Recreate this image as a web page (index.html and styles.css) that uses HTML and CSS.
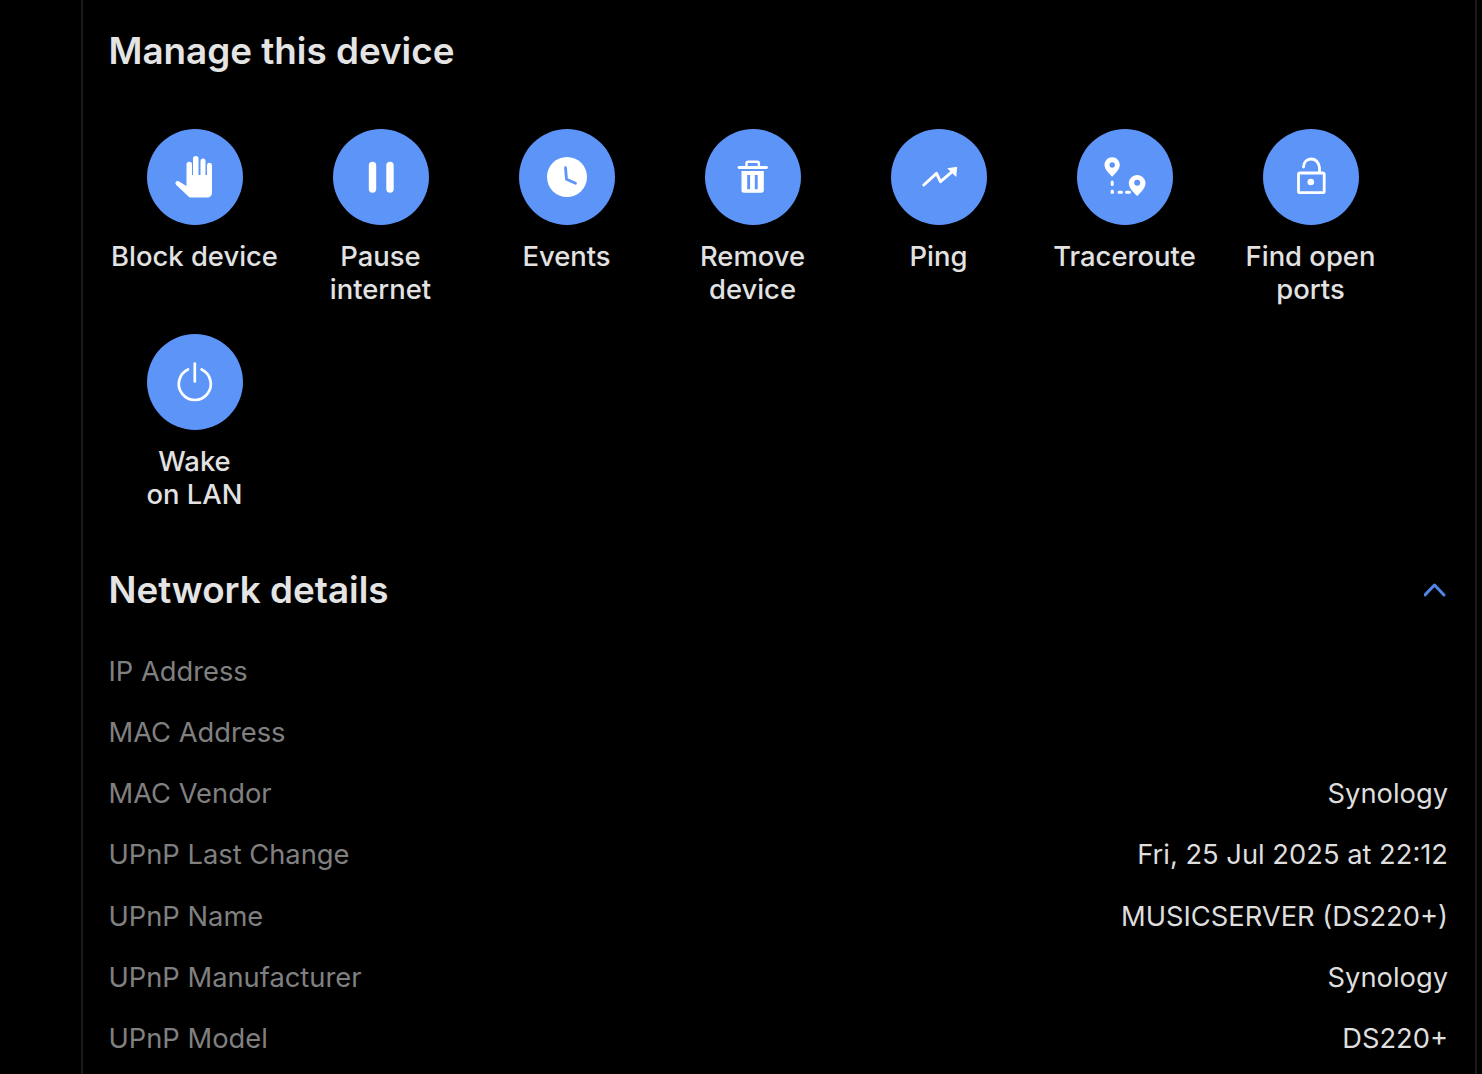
FILE: index.html
```html
<!DOCTYPE html>
<html lang="en">
<head>
<meta charset="utf-8">
<title>Manage this device</title>
<link rel="stylesheet" href="styles.css">
</head>
<body>
<main class="panel">
  <h2 class="title manage-title">Manage this device</h2>
  <div class="actions">
    <div class="action">
      <div class="circle"><svg viewBox="0 0 48 48" class="icon"><path fill="#fff" d="M15.500 11.500a2.750 2.750 0 0 1 5.500 0V22h1V5.700a2.750 2.750 0 0 1 5.500 0V22h2V8a2.500 2.500 0 0 1 5 0V22H36V12.200a2.500 2.500 0 0 1 5 0V40a4.500 4.500 0 0 1-4.500 4.500H20.500c-1.500 0-2.500-.5-3.500-1.500L5.300 32c-2-2 0-5 2.700-3.500L15.500 33z"/></svg></div>
      <div class="label">Block device</div>
    </div>
    <div class="action">
      <div class="circle"><svg viewBox="0 0 48 48" class="icon"><rect x="11.800" y="8.700" width="7.400" height="31" rx="3.700" fill="#fff"/><rect x="29.300" y="8.700" width="7.400" height="31" rx="3.700" fill="#fff"/></svg></div>
      <div class="label">Pause<br>internet</div>
    </div>
    <div class="action">
      <div class="circle"><svg viewBox="0 0 48 48" class="icon"><circle cx="24" cy="24" r="20" fill="#fff"/><path d="M22.500 14.700L23.500 26.300L32.500 30.300" fill="none" stroke="#5c94f7" stroke-width="2.800" stroke-linecap="round" stroke-linejoin="round"/></svg></div>
      <div class="label">Events</div>
    </div>
    <div class="action">
      <div class="circle"><svg viewBox="0 0 48 48" class="icon"><path fill="none" stroke="#fff" stroke-width="2.400" d="M17.500 14V10.500c0-1 .8-1.700 1.700-1.700h9c.9 0 1.700.7 1.700 1.700V14"/><path stroke="#fff" stroke-width="2.800" stroke-linecap="round" d="M10 14.500h27.500"/><path fill="#fff" fill-rule="evenodd" d="M12.500 18h22.300v19.400c0 1.300-1 2.300-2.300 2.300H14.800c-1.300 0-2.300-1-2.300-2.300zM18.200 22v14.300h2.900V22zM25.800 22v14.300h2.900V22z"/></svg></div>
      <div class="label">Remove<br>device</div>
    </div>
    <div class="action">
      <div class="circle"><svg viewBox="0 0 48 48" class="icon"><path fill="none" stroke="#fff" stroke-width="3" stroke-linecap="round" stroke-linejoin="round" d="M8.800 32L21.500 20.300L25.500 28.700L37.200 18.700"/><path fill="#fff" d="M32.200 15.300L42.200 13.700L41.200 24z"/></svg></div>
      <div class="label">Ping</div>
    </div>
    <div class="action">
      <div class="circle"><svg viewBox="0 0 48 48" class="icon"><path fill="#fff" fill-rule="evenodd" d="M11.200 4.300c-4.200 0-7.700 3.400-7.700 7.700 0 4.200 4.500 8.500 7.700 11.700 3.200-3.200 7.600-7.500 7.600-11.700 0-4.300-3.400-7.700-7.600-7.700zm0 5a2.700 2.700 0 1 1 0 5.400 2.700 2.700 0 0 1 0-5.400zM36.200 22c-4.600 0-8.400 3.700-8.400 8.300 0 4.700 5 9.500 8.400 12.700 3.400-3.200 8.300-8 8.300-12.700 0-4.600-3.700-8.300-8.300-8.300zm0 4.700a3 3 0 1 1 0 6 3 3 0 0 1 0-6z"/><path fill="none" stroke="#fff" stroke-width="3" stroke-linecap="round" d="M11.200 29v2.500M11.200 38v1.300h.5M18 39.300h2.500M25.500 39.300h3"/></svg></div>
      <div class="label">Traceroute</div>
    </div>
    <div class="action">
      <div class="circle"><svg viewBox="0 0 48 48" class="icon"><path fill="none" stroke="#fff" stroke-width="2.800" stroke-linecap="round" d="M16.500 14c0-5 3.500-8 7.500-8s7.500 3 8.500 8.500V19"/><rect x="11.500" y="20" width="25.700" height="19.700" rx="1.500" fill="none" stroke="#fff" stroke-width="2.800"/><circle cx="23.800" cy="29" r="3.300" fill="#fff"/></svg></div>
      <div class="label">Find open<br>ports</div>
    </div>
    <div class="action">
      <div class="circle"><svg viewBox="0 0 48 48" class="icon"><path fill="none" stroke="#fff" stroke-width="2.700" stroke-linecap="round" d="M17 11.500a16 16 0 1 0 13.600 0"/><path stroke="#fff" stroke-width="2.700" stroke-linecap="round" d="M23.800 5.500v18"/></svg></div>
      <div class="label">Wake<br>on LAN</div>
    </div>
  </div>
  <div class="section-head">
    <h2 class="title">Network details</h2>
    <svg viewBox="0 0 24 16" class="chevron"><path d="M1 13L10.500 3L20 13" fill="none" stroke="#4f86e8" stroke-width="3" stroke-linecap="round" stroke-linejoin="round"/></svg>
  </div>
  <dl class="details">
    <div class="row"><dt>IP Address</dt><dd></dd></div>
    <div class="row"><dt>MAC Address</dt><dd></dd></div>
    <div class="row"><dt>MAC Vendor</dt><dd>Synology</dd></div>
    <div class="row"><dt>UPnP Last Change</dt><dd>Fri, 25 Jul 2025 at 22:12</dd></div>
    <div class="row"><dt>UPnP Name</dt><dd>MUSICSERVER (DS220+)</dd></div>
    <div class="row"><dt>UPnP Manufacturer</dt><dd>Synology</dd></div>
    <div class="row"><dt>UPnP Model</dt><dd>DS220+</dd></div>
  </dl>
</main>
</body>
</html>
```
FILE: styles.css
```css
html, body {
  margin: 0;
  height: 100%;
  background: #000;
  overflow: hidden;
}
body {
  font-family: Inter, "Liberation Sans", sans-serif;
  color: #e4e4e4;
}
.panel {
  box-sizing: border-box;
  width: 1396px;
  height: 1074px;
  margin-left: 81px;
  padding: 0 27px 0 25.5px;
  border-left: 2px solid #1a1a1c;
  border-right: 2px solid #1a1a1c;
  overflow: hidden;
}
.title {
  margin: 0;
  font-size: 36.8px;
  line-height: 44px;
  font-weight: 600;
  color: #e4e4e4;
}
.manage-title {
  padding-top: 29px;
}
.actions {
  display: grid;
  grid-template-columns: repeat(7, 186px);
  grid-auto-rows: 205px;
  margin: 56px 0 0 -7px;
}
.action {
  display: flex;
  flex-direction: column;
  align-items: center;
}
.circle {
  width: 96px;
  height: 96px;
  flex: none;
  border-radius: 50%;
  background: #5c94f7;
  display: flex;
  align-items: center;
  justify-content: center;
}
.icon {
  width: 48px;
  height: 48px;
}
.label {
  margin-top: 15px;
  font-size: 27.4px;
  line-height: 33px;
  font-weight: 500;
  text-align: center;
  white-space: nowrap;
  color: #e2e2e2;
}
.section-head {
  display: flex;
  justify-content: space-between;
  align-items: center;
  margin-top: 29px;
}
.chevron {
  width: 24px;
  height: 16px;
}
.details {
  margin: 43px 0 0;
}
.row {
  display: flex;
  justify-content: space-between;
  height: 61.17px;
  font-size: 27.3px;
  line-height: 33px;
}
.row dt {
  color: #808080;
}
.row dd {
  margin: 0;
  color: #dedede;
}
```
